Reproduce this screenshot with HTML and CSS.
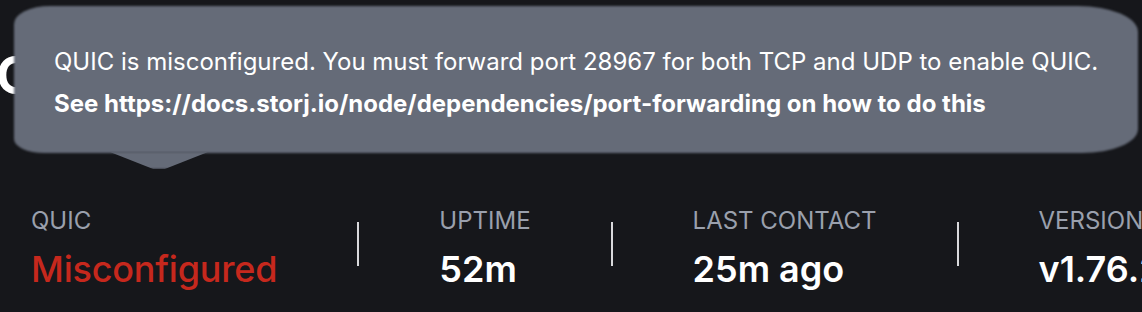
FILE: index.html
```html
<!DOCTYPE html>
<html lang="en">
<head>
    <meta charset="UTF-8">
    <title>Node status</title>
    <link rel="stylesheet" href="styles.css">
</head>
<body>
    <!-- Заголовок (почти закрыт подсказкой) -->
    <h1 class="page-title">Overview</h1>

    <!-- Подсказка QUIC -->
    <div class="tooltip">
        <p class="tooltip-text">QUIC is misconfigured. You must forward port 28967 for both TCP and UDP to enable QUIC.</p>
        <p class="tooltip-text tooltip-link">See https://docs.storj.io/node/dependencies/port-forwarding on how to do this</p>
    </div>

    <!-- Статусы узла -->
    <div class="stats">
        <div class="stat">
            <span class="stat-label">QUIC</span>
            <span class="stat-value stat-value--bad">Misconfigured</span>
        </div>
        <div class="divider"></div>
        <div class="stat">
            <span class="stat-label">UPTIME</span>
            <span class="stat-value">52m</span>
        </div>
        <div class="divider"></div>
        <div class="stat">
            <span class="stat-label">LAST CONTACT</span>
            <span class="stat-value">25m ago</span>
        </div>
        <div class="divider"></div>
        <div class="stat">
            <span class="stat-label">VERSION</span>
            <span class="stat-value">v1.76.2</span>
        </div>
    </div>
</body>
</html>
```

FILE: styles.css
```css
/* Базовые стили */
body {
    font-family: Inter, "Noto Sans", sans-serif;
    color: white;
    background-color: #16171b;
    margin: 0;
    padding: 0;
    overflow: hidden;
    position: relative;
    height: 312px;
}

.page-title {
    font-size: 52px;
    line-height: 64px;
    font-weight: 700;
    margin: 44px 0 0 -4px;
    white-space: nowrap;
}

/* Подсказка */
.tooltip {
    position: absolute;
    top: 6px;
    left: 14px;
    width: 1124px;
    height: 147px;
    box-sizing: border-box;
    padding: 35px 0 0 40px;
}

.tooltip::before {
    content: '';
    position: absolute;
    inset: 0;
    background-color: #656b78;
    border-radius: 36px 60px 56px 30px / 18px 26px 24px 14px;
    filter: blur(1px);
}

.tooltip::after {
    content: '';
    position: absolute;
    top: 146px;
    left: 96px;
    width: 98px;
    height: 17px;
    background-color: #656b78;
    clip-path: polygon(0 0, 100% 0, 56% 100%, 44% 100%);
    filter: blur(1px);
}

.tooltip-text {
    position: relative;
    margin: 0;
    font-size: 24px;
    line-height: 42px;
    color: #ffffff;
    white-space: nowrap;
}

.tooltip-link {
    font-weight: 700;
}

/* Статусы */
.stats {
    display: flex;
    align-items: center;
    gap: 80px;
    margin-top: 98px;
    padding-left: 31px;
    white-space: nowrap;
}

.stat {
    display: flex;
    flex-direction: column;
}

.stat-label {
    font-size: 24px;
    line-height: 30px;
    color: #9aa0ad;
    margin-bottom: 11px;
}

.stat-value {
    font-size: 36px;
    line-height: 44px;
    font-weight: 600;
    color: #ffffff;
}

.stat-value--bad {
    font-weight: 500;
    letter-spacing: -0.2px;
    color: #c6281d;
}

.divider {
    width: 2px;
    height: 44px;
    margin-bottom: 9px;
    background-color: #d9d9dc;
    flex-shrink: 0;
}
```
